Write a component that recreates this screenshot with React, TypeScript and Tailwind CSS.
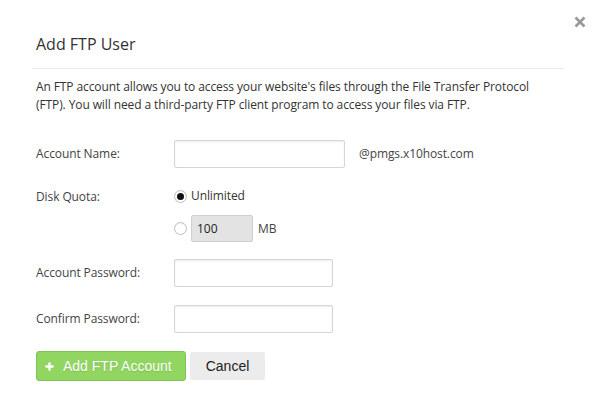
import { Plus } from "lucide-react";

const labelCls = "w-[138px] shrink-0 text-[12px] tracking-[-0.1px] text-[#444]";
const inputCls =
  "h-[28px] rounded-[2px] border border-[#d6d6d6] bg-white shadow-[inset_0_1px_2px_rgba(0,0,0,0.08)] outline-none px-2 text-[12px]";

const Radio = ({ checked }: { checked?: boolean }): JSX.Element => (
  <span className="w-[13px] h-[13px] rounded-full border border-[#bdbdbd] bg-white flex items-center justify-center shadow-[inset_0_1px_1px_rgba(0,0,0,0.06)]">
    {checked && <span className="w-[7px] h-[7px] rounded-full bg-[#111]" />}
  </span>
);

export default function App(): JSX.Element {
  return (
    <div
      className="relative w-[600px] h-[414px] bg-white text-[#333] overflow-hidden"
      style={{ fontFamily: '"Open Sans", sans-serif' }}
    >
      <button className="absolute top-[15px] right-[13px] w-[14px] h-[14px] flex items-center justify-center text-[#999]">
        <svg width="12" height="12" viewBox="0 0 12 12">
          <path d="M1.5 1.5 L10.5 10.5 M10.5 1.5 L1.5 10.5" stroke="currentColor" strokeWidth="2.6" />
        </svg>
      </button>

      <div className="px-[36px] pt-[33px]">
        <h2 className="text-[16px] leading-[22px] text-[#333]">Add FTP User</h2>
        <div className="mt-[13px] -ml-[4px] border-t border-[#e6eef4]" />

        <p className="mt-[9px] w-[500px] text-[12px] tracking-[-0.1px] leading-[18px] text-[#333]">
          An FTP account allows you to access your website's files through the File Transfer Protocol
          (FTP). You will need a third-party FTP client program to access your files via FTP.
        </p>

        <div className="mt-[26px] flex items-center">
          <span className={labelCls}>Account Name:</span>
          <input className={`${inputCls} w-[171px]`} />
          <span className="ml-[14px] text-[12px] tracking-[-0.1px] text-[#444]">@pmgs.x10host.com</span>
        </div>

        <div className="mt-[18px] flex items-start">
          <span className={`${labelCls} leading-[20px] pt-[1px]`}>Disk Quota:</span>
          <div className="flex flex-col">
            <div className="h-[20px] flex items-center gap-[4px]">
              <Radio checked />
              <span className="text-[12px] tracking-[-0.1px] text-[#333]">Unlimited</span>
            </div>
            <div className="mt-[9px] flex items-center">
              <Radio />
              <input
                className="ml-[4px] w-[62px] h-[27px] rounded-[2px] border border-[#d0d0d0] bg-[#e3e3e3] px-[5px] text-[12px] text-[#222] outline-none"
                defaultValue="100"
              />
              <span className="ml-[5px] text-[12px] text-[#444]">MB</span>
            </div>
          </div>
        </div>

        <div className="mt-[17px] flex items-center">
          <span className={labelCls}>Account Password:</span>
          <input type="password" className={`${inputCls} w-[159px]`} />
        </div>

        <div className="mt-[18px] flex items-center">
          <span className={labelCls}>Confirm Password:</span>
          <input type="password" className={`${inputCls} w-[159px]`} />
        </div>

        <div
          className="mt-[18px] flex items-center gap-[4px]"
          style={{ fontFamily: '"Liberation Sans", Arial, sans-serif' }}
        >
          <button className="h-[30px] w-[150px] rounded-[3px] border border-[#7fc354] bg-[#92d662] text-white text-[14px] flex items-center justify-start pl-[7px] gap-[8px] [text-shadow:0_1px_1px_rgba(0,0,0,0.15)]">
            <Plus size={11} strokeWidth={5} />
            Add FTP Account
          </button>
          <button className="h-[28px] w-[75px] rounded-[2px] bg-[#ececec] text-[#222] text-[14px]">
            Cancel
          </button>
        </div>
      </div>
    </div>
  );
}
